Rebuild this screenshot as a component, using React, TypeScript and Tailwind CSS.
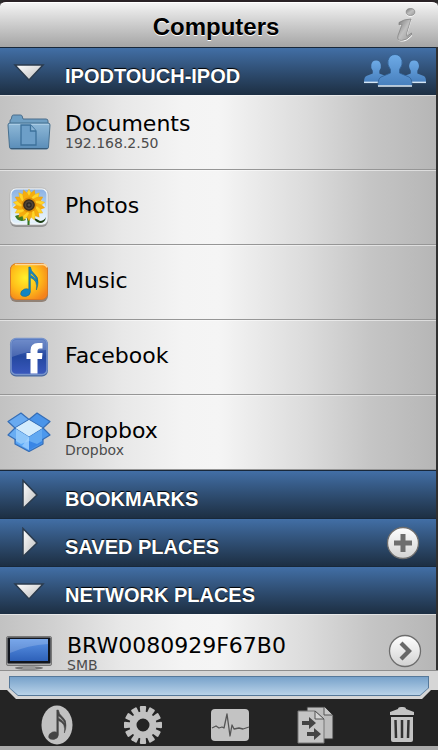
import type { ReactNode } from "react";

const petals = Array.from({ length: 18 }, (_, i) => i * 20);
const teeth = Array.from({ length: 12 }, (_, i) => i * 30);

function FolderIcon() {
  return (
    <svg width="44" height="36" viewBox="0 0 44 36" aria-hidden="true">
      <defs>
        <linearGradient id="folder" x1="0" y1="0" x2="0" y2="1">
          <stop offset="0" stopColor="#8fb9d8" />
          <stop offset="1" stopColor="#5a8db8" />
        </linearGradient>
      </defs>
      <path d="M3 10V7q0-1.500 1.200-1.700L5 2q.4-1 1.500-1h7q1.200 0 1.600 1l.9 3h23q2 0 2 2v3z" fill="#6f9fc3" stroke="#4a6d8b" />
      <path d="M1 11q0-2 2-2h38q2 0 2 2l-1.500 22q-.2 2-2 2h-35q-1.800 0-2-2z" fill="url(#folder)" stroke="#47708f" />
      <path d="M2 10.500h40" stroke="#a9cbe4" />
      <path d="M3.500 34.500h37" stroke="#365a78" strokeWidth="1.200" />
      <path d="M14 11h9.500l5.500 6v14H14z" fill="#6d9fc8" stroke="#3d719b" strokeWidth="1.300" />
      <path d="M23.500 11v6H29" fill="#8ab4d5" stroke="#3d719b" strokeWidth="1.300" />
    </svg>
  );
}

function PhotosIcon() {
  return (
    <svg width="40" height="40" viewBox="0 0 40 40" aria-hidden="true">
      <defs>
        <linearGradient id="sky" x1="0" y1="0" x2="0" y2="1">
          <stop offset="0" stopColor="#8db2e4" />
          <stop offset=".65" stopColor="#bcdcf4" />
          <stop offset="1" stopColor="#e6f2fb" />
        </linearGradient>
        <radialGradient id="seed">
          <stop offset="0" stopColor="#6e665d" />
          <stop offset=".35" stopColor="#29241f" />
          <stop offset=".6" stopColor="#54493c" />
          <stop offset="1" stopColor="#2b1b0c" />
        </radialGradient>
      </defs>
      <rect x="1" y="2" width="38" height="38" rx="6" fill="#777" opacity=".65" />
      <rect x="1" y="1" width="38" height="37" rx="6" fill="#f2f6f8" stroke="#aaa" strokeWidth=".6" />
      <rect x="2.500" y="2.500" width="35" height="34" rx="5" fill="url(#sky)" />
      <path d="M3 20q8-7 12 0t11-3 11 4v11q-16 6-34 0z" fill="#fff" opacity=".4" />
      <path d="M17.500 30q1.500 4 1 8h2q0-4 .5-8z" fill="#35751f" />
      <path d="M17 33Q9 36 6 29q7-3 11 4z" fill="#3e7b20" />
      <path d="M25 31q3 1 6 3 4 0 6-4-1 6-6 6-5-1-6-5z" fill="#1d3d12" />
      <g>
        {petals.map((a) => (
          <path
            key={a}
            d="M20 18q-6-8 0-16 6 8 0 16z"
            fill={a % 40 ? "#f6ac0e" : "#ffd529"}
            stroke="#e49a09"
            strokeWidth=".3"
            transform={`rotate(${a} 20 18)`}
          />
        ))}
      </g>
      <circle cx="20" cy="18" r="7.500" fill="#d98708" opacity=".8" />
      <circle cx="20" cy="18" r="5.800" fill="url(#seed)" />
    </svg>
  );
}

// Sixteenth note shared by the Music row and the toolbar
const NOTE =
  "M19.800 5h1.600q.6 4 3.600 6.500 4.500 3.500 4 9 0 3.500-1.600 7.500.6-5-.6-8-1.600-3-5.400-4.500V30q-.3 3.600-4.400 4.400-4.600.6-5.400-2.200-.2-3.600 4-5.200 2.400-.7 4.200.2zM21.400 11v2q4 2 6.400 5.500-1.600-4.500-6.400-7.500z";

function MusicIcon() {
  return (
    <svg width="40" height="40" viewBox="0 0 40 40" aria-hidden="true">
      <defs>
        <radialGradient id="amber" cx=".4" cy=".4" r=".7">
          <stop offset="0" stopColor="#fff12b" />
          <stop offset=".55" stopColor="#ffbd19" />
          <stop offset="1" stopColor="#f4831c" />
        </radialGradient>
      </defs>
      <rect x="1" y="2" width="38" height="38" rx="6" fill="#7d6a5a" opacity=".75" />
      <rect x="1.500" y="1.500" width="37" height="36" rx="6" fill="url(#amber)" stroke="#d87925" />
      <path d="M6 2.500h28q3 0 4 3" fill="none" stroke="#ffd99b" strokeWidth="1.300" />
      <path d={NOTE} fillRule="evenodd" fill="#1485c3" stroke="#126383" strokeWidth=".5" />
    </svg>
  );
}

function FacebookIcon() {
  return (
    <svg width="40" height="40" viewBox="0 0 40 40" aria-hidden="true">
      <defs>
        <linearGradient id="fb" x1="0" y1="0" x2="0" y2="1">
          <stop offset="0" stopColor="#5477c1" />
          <stop offset=".5" stopColor="#2448a0" />
          <stop offset="1" stopColor="#3a58bd" />
        </linearGradient>
      </defs>
      <rect x="1" y="1.500" width="38" height="38" rx="6" fill="#49689f" />
      <rect x="2" y="1.500" width="36" height="36" rx="5" fill="url(#fb)" stroke="#7894cb" strokeWidth="1.500" />
      <path d="M3 7q0-4 4-4h26q4 0 4 4v6Q17 14 3 20z" fill="#fff" opacity=".17" />
      <path d="M21.500 36.500V22h-4v-6h4v-2.500q0-7.500 7.500-7.500h4.500v5.500H31q-2.500 0-2.500 2.500v2h5l-.5 6h-4.500v14.500z" fill="#fff" />
    </svg>
  );
}

function DropboxIcon() {
  return (
    <svg width="44" height="40" viewBox="0 0 44 40" aria-hidden="true">
      <g stroke="#356eb7" strokeWidth="1.200" strokeLinejoin="round">
        <path d="M8 22v10l14 7.500L36 32V22L22 15z" fill="#4d96ea" />
        <path d="M1 9.500L14 1l8 6.500L8 16z" fill="#69aaf0" />
        <path d="M43 9.500L30 1l-8 6.500L36 16z" fill="#4a94e9" />
        <path d="M1 23l7-7 14 9-8 6z" fill="#68adf3" />
        <path d="M43 23l-7-7-14 9 8 6z" fill="#4c98ed" />
      </g>
      <path d="M22 8L8.500 16 22 24.500 35.500 16z" fill="#d3ebfc" />
      <path d="M9 17l13 8v13L9 31z" fill="#5daaf8" />
      <path d="M35 17l-13 8v13l13-7z" fill="#3986e6" />
      <path d="M9 17l13 8v4l-8 3-5-3z" fill="#a0d0fb" opacity=".75" />
      <path d="M35 17l-13 8v4l8 3 5-3z" fill="#70b4f6" opacity=".75" />
      <path d="M22 25l-7 9 7 4z" fill="#a7d4ff" opacity=".65" />
    </svg>
  );
}

function MonitorIcon() {
  return (
    <svg width="46" height="38" viewBox="0 -4 46 38" aria-hidden="true">
      <defs>
        <linearGradient id="screen" x1="0" y1="0" x2="0" y2="1">
          <stop offset="0" stopColor="#5b94e6" />
          <stop offset="1" stopColor="#2e61b9" />
        </linearGradient>
      </defs>
      <ellipse cx="23" cy="32" rx="14" ry="1.700" fill="#777" />
      <path d="M18 29h10l2 4H16z" fill="#999" />
      <rect x=".5" y=".5" width="45" height="29" rx="1.500" fill="#aaa" stroke="#777" />
      <rect x="1.500" y="1.500" width="43" height="26" rx="1" fill="#11151d" />
      <rect x="4" y="3" width="38" height="22" fill="url(#screen)" />
      <path d="M4 3h38v5Q22 9 4 17z" fill="#fff" opacity=".18" />
    </svg>
  );
}

function PeopleIcon() {
  return (
    <svg width="62" height="36" viewBox="0 0 62 36" aria-hidden="true">
      <defs>
        <linearGradient id="people" x1="0" y1="0" x2="0" y2="1">
          <stop offset="0" stopColor="#6eabe7" />
          <stop offset="1" stopColor="#477fbd" />
        </linearGradient>
      </defs>
      {["translate(0 5) scale(.73)", "translate(38 5) scale(.73)"].map((t) => (
        <g key={t} transform={t}>
          <path d="M0 32q0-8 4-9l8-3v-4q-3-4-2-8 1-6 6.500-6T23 8q1 4-2 8v4l8 3q4 1 4 9z" fill="url(#people)" />
          <path d="M0 32h33" stroke="#d5e5f4" strokeWidth="2" />
        </g>
      ))}
      <path
        d="M14 31.500q0-7 3-8.500l9.500-4v-3.500q-3.500-4.500-2.500-9Q25.500.500 31 .500t7 6q1 4.500-2.500 9V19l9.500 4q3 1.500 3 8.500z"
        fill="url(#people)"
        stroke="#315f93"
        strokeWidth=".8"
      />
      <path d="M14 32h34" stroke="#e0edf7" strokeWidth="1.500" />
    </svg>
  );
}

const INFO_STEM = "M3 14.500q5-3.500 12-3.500l-4.500 15q-.5 2.500 1 2l4-3v2q-5 5.500-10 5.500-5 0-3.500-5L6 16.500l-3 .5z";

function InfoIcon() {
  return (
    <svg width="20" height="34" viewBox="0 0 20 34" aria-hidden="true">
      <defs>
        <linearGradient id="info" x1="0" y1="0" x2="1" y2="1">
          <stop offset="0" stopColor="#777" />
          <stop offset=".5" stopColor="#c0c0c0" />
          <stop offset="1" stopColor="#999" />
        </linearGradient>
      </defs>
      <path d={INFO_STEM} fill="#fff" transform="translate(.5 1)" />
      <ellipse cx="14.500" cy="5" rx="4.500" ry="3.800" fill="#fff" />
      <path d={INFO_STEM} fill="url(#info)" stroke="#808080" strokeWidth=".7" />
      <ellipse cx="14.500" cy="4" rx="4.300" ry="3.500" fill="url(#info)" stroke="#808080" strokeWidth=".7" />
    </svg>
  );
}

function RoundIcon({ children }: { children: ReactNode }) {
  return (
    <svg width="34" height="34" viewBox="0 0 34 34" aria-hidden="true">
      <defs>
        <linearGradient id="round" x1="0" y1="0" x2="0" y2="1">
          <stop offset="0" stopColor="#fff" />
          <stop offset="1" stopColor="#d2d2d2" />
        </linearGradient>
      </defs>
      <circle cx="17" cy="17" r="15.500" fill="url(#round)" stroke="#6d6d6d" strokeWidth="1.300" />
      {children}
    </svg>
  );
}

function Triangle({ open }: { open: boolean }) {
  return (
    <svg width="32" height="32" viewBox="0 0 32 32" aria-hidden="true">
      <defs>
        <linearGradient id="tri" x1="0" y1="0" x2="1" y2="1">
          <stop offset="0" stopColor="#fff" />
          <stop offset="1" stopColor="#bbb" />
        </linearGradient>
      </defs>
      {open ? (
        <path d="M2 9h28L16 24z" fill="url(#tri)" stroke="#2b3b4d" strokeWidth="1.500" />
      ) : (
        <path d="M10 1.500v28L24 16z" fill="url(#tri)" stroke="#2b3b4d" strokeWidth="1.500" />
      )}
    </svg>
  );
}

function Section({ title, open = false, action }: { title: string; open?: boolean; action?: ReactNode }) {
  return (
    <div className="flex h-12 shrink-0 items-center border-t border-[#18283a] bg-linear-to-b from-[#426fa6] to-[#1d2f43] pr-[10px]">
      <button aria-expanded={open} className="flex flex-1 items-center text-left">
        <span className="flex w-[65px] justify-center pr-2">
          <Triangle open={open} />
        </span>
        <span className="pt-2 font-['Liberation_Sans',sans-serif] text-[20px] leading-6 font-bold text-white [text-shadow:0_-1px_1px_#000]">
          {title}
        </span>
      </button>
      {action}
    </div>
  );
}

// Where the text block sits inside a row
const textPlace = {
  normal: "h-full pt-[25px]",
  host: "h-full pt-[18px]",
  network: "h-full pt-[21px] pl-0.5",
};

type RowProps = { icon: ReactNode; title: string; detail?: string; kind?: keyof typeof textPlace; action?: ReactNode };

function Row({ icon, title, detail, kind = "normal", action }: RowProps) {
  return (
    <li className="flex h-[75px] shrink-0 items-center border-b border-[#969696] bg-[linear-gradient(to_right,#c2c2c2,#d0d0d0_12%,#e8e8e8_28%,#f4f4f4_42%,#f5f5f5_50%,#dcdcdc_70%,#c5c5c5_85%,#b6b6b6)] shadow-[inset_0_1px_0_#ffffff80]">
      <button className="flex h-full flex-1 items-center text-left">
        <span className="flex w-[65px] justify-center pr-2">{icon}</span>
        <span className={textPlace[kind]}>
          <span className="block text-[22px] leading-[22px] text-black">{title}</span>
          {detail && <span className="block text-[14px] leading-4 text-[#4c4c4c]">{detail}</span>}
        </span>
      </button>
      {action}
    </li>
  );
}

function ToolButton({ label, children }: { label: string; children: ReactNode }) {
  return (
    <button aria-label={label} className="w-10">
      <svg width="40" height="40" viewBox="0 0 40 40" aria-hidden="true">
        {children}
      </svg>
    </button>
  );
}

export default function App() {
  return (
    <div className="flex h-screen flex-col overflow-hidden bg-[#2b2b2b] font-['DejaVu_Sans',sans-serif]">
      <header className="grid h-[47px] shrink-0 grid-cols-[1fr_auto_1fr] items-center rounded-t-md border-t-2 border-[#292125] bg-linear-to-b from-[#f5f5f5] to-[#a5a5a5] pr-1.5 shadow-[inset_0_1px_0_#fff]">
        <h1 className="col-start-2 pt-1 font-['Liberation_Sans',sans-serif] text-[24px] leading-8 font-bold text-black [text-shadow:0_1px_0_#fff]">
          Computers
        </h1>
        <button aria-label="Info" className="mr-4 justify-self-end">
          <InfoIcon />
        </button>
      </header>

      <main className="flex min-h-0 flex-1 flex-col overflow-hidden border-r-2 border-[#303030]">
        <Section
          title="IPODTOUCH-IPOD"
          open
          action={
            <button aria-label="Users">
              <PeopleIcon />
            </button>
          }
        />
        <ul className="shrink-0">
          <Row icon={<FolderIcon />} title="Documents" detail="192.168.2.50" kind="host" />
          <Row icon={<PhotosIcon />} title="Photos" />
          <Row icon={<MusicIcon />} title="Music" />
          <Row icon={<FacebookIcon />} title="Facebook" />
          <Row icon={<DropboxIcon />} title="Dropbox" detail="Dropbox" />
        </ul>
        <Section title="BOOKMARKS" />
        <Section
          title="SAVED PLACES"
          action={
            <button aria-label="Add place" className="mr-1.5">
              <RoundIcon>
                <path d="M14.500 8h5v6.500H26v5h-6.500V26h-5v-6.500H8v-5h6.500z" fill="#6e6e6e" />
              </RoundIcon>
            </button>
          }
        />
        <Section title="NETWORK PLACES" open />
        <ul className="shrink-0">
          <Row
            icon={<MonitorIcon />}
            title="BRW0080929F67B0"
            detail="SMB"
            kind="network"
            action={
              <button aria-label="Open" className="mr-3.5">
                <RoundIcon>
                  <path d="M11.500 10.500l3-3 9.500 9.500-9.500 9.500-3-3L18 17z" fill="#686868" />
                </RoundIcon>
              </button>
            }
          />
        </ul>
      </main>

      <footer className="shrink-0 border-b-4 border-[#aaa] bg-[#242424]">
        <div className="border-t border-[#8e8e8e] bg-[#d6d6d6] px-[9px] pt-[5px] pb-[3px] [clip-path:polygon(0_0,100%_0,100%_20px,calc(100%-7px)_20px,calc(100%-16px)_100%,16px_100%,7px_20px,0_20px)]">
          <div className="bg-[#56799a] p-px [clip-path:polygon(0_0,100%_0,100%_12px,calc(100%-9px)_100%,9px_100%,0_12px)]">
            <div className="h-[18px] bg-linear-to-b from-[#78a2ca] to-[#b9d3e9] [clip-path:polygon(0_0,100%_0,100%_11px,calc(100%-8px)_100%,8px_100%,0_11px)]" />
          </div>
        </div>
        <nav className="flex h-[47px] items-center justify-between pt-1 pr-4 pl-[37px]">
          <ToolButton label="Music">
            <ellipse cx="20" cy="20" rx="15.500" ry="19.500" fill="#c1c1c1" />
            <path d={NOTE} fillRule="evenodd" fill="#444" stroke="#444" strokeWidth=".5" />
          </ToolButton>
          <ToolButton label="Settings">
            {teeth.map((a) => (
              <path key={a} d="M17.400 8l-.6-6q.2-1 1-1h4.400q.8 0 1 1l-.6 6z" fill="#c1c1c1" transform={`rotate(${a} 20 20)`} />
            ))}
            <circle cx="20" cy="20" r="10" fill="none" stroke="#c1c1c1" strokeWidth="7" />
          </ToolButton>
          <ToolButton label="Activity">
            <rect x="1" y="4" width="38" height="32" rx="4" fill="#c3c3c3" />
            <path d="M2 23l4-2 3 2 3-1 2 1 3-14 3 22 2-11 2 4 5-1 4 1 6-2" fill="none" stroke="#555" strokeWidth="1.300" strokeLinejoin="round" />
          </ToolButton>
          <ToolButton label="Transfers">
            <path d="M11 2h18l8 8v24H11z" fill="#bdbdbd" stroke="#333" />
            <path d="M28 2v8h8" fill="#c9c9c9" stroke="#555" />
            <path d="M2 6h17l9 8v24H2z" fill="#c4c4c4" stroke="#777" />
            <path d="M19 6v8h9z" fill="#d4d4d4" stroke="#555" />
            <path d="M6 16h7v-4l7 6-7 6v-4H6zM11 27h7v-4l7 6-7 6v-4h-7z" fill="#444" />
          </ToolButton>
          <ToolButton label="Trash">
            <path d="M8 10V7l8-3q0-2 3-2h2q3 0 3 2l8 3v3z" fill="#c3c3c3" />
            <path d="M9 12h22v23q0 2-2 2H11q-2 0-2-2z" fill="#c3c3c3" />
            <path d="M13.500 15l.5 18M20 15v18M26.500 15l-.5 18" stroke="#333" strokeWidth="2.500" />
          </ToolButton>
        </nav>
      </footer>
    </div>
  );
}
